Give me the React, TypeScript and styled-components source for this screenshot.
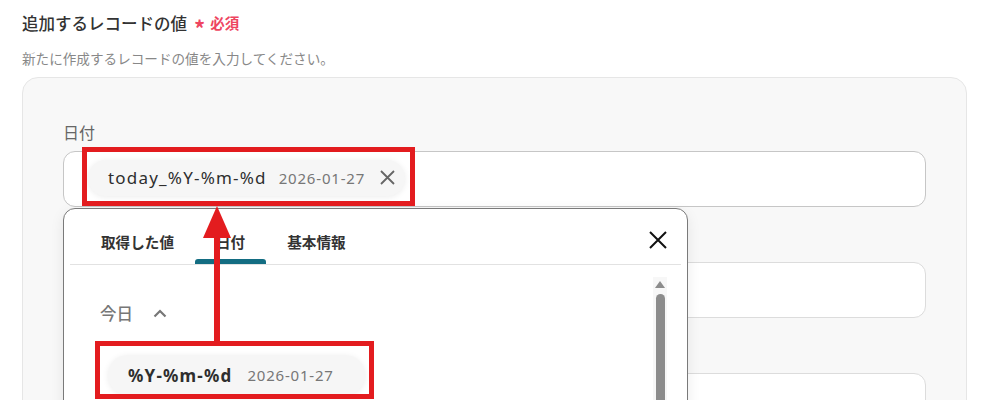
import React from "react";
import styled, { createGlobalStyle } from "styled-components";

const Global = createGlobalStyle`
  html, body { margin: 0; padding: 0; background: #ffffff; }
  body {
    font-family: "Noto Sans", "Noto Sans CJK JP", sans-serif;
    color: #333;
  }
`;

const Page = styled.div`
  position: relative;
  width: 999px;
  height: 400px;
  overflow: hidden;
  box-sizing: border-box;
  padding: 11px 32px 0 22px;
`;

const TitleRow = styled.div`
  display: flex;
  align-items: center;
  gap: 7px;
  height: 24px;
`;

const Title = styled.h2`
  margin: 0;
  font-family: "Noto Sans CJK JP", sans-serif;
  font-size: 16.5px;
  font-weight: 500;
  color: #333;
  line-height: 24px;
`;

const Required = styled.span`
  display: flex;
  align-items: center;
  gap: 5px;
  color: #ee4560;
  font-family: "Noto Sans CJK JP", sans-serif;
  font-size: 14.5px;
  font-weight: 700;
  line-height: 24px;
`;

const Asterisk = styled.span`
  font-size: 22px;
  font-weight: 700;
  line-height: 24px;
  position: relative;
  top: 4px;
`;

const Sub = styled.p`
  margin: 13px 0 0;
  font-family: "Noto Sans CJK JP", sans-serif;
  font-size: 13.6px;
  color: #888;
  line-height: 20px;
`;

const Panel = styled.div`
  margin-top: 9px;
  border: 1px solid #e6e6e6;
  border-radius: 16px;
  background: #f8f8f8;
  padding: 43px 40px 0 40px;
  height: 400px;
  box-sizing: border-box;
  display: flex;
  flex-direction: column;
  gap: 25px;
`;

const Field = styled.div`
  position: relative;
  display: flex;
  flex-direction: column;
  gap: 8px;
`;

const Label = styled.label`
  font-family: "Noto Sans CJK JP", sans-serif;
  font-size: 16px;
  color: #666;
  line-height: 22px;
  height: 22px;
`;

const Input = styled.div<{ $focused?: boolean }>`
  height: 56px;
  box-sizing: border-box;
  border: 1px solid ${(p) => (p.$focused ? "#c6c6c6" : "#dcdcdc")};
  border-radius: 12px;
  background: #fff;
  display: flex;
  align-items: center;
  padding-left: 24px;
`;

const Chip = styled.div<{ $tall?: boolean }>`
  display: inline-flex;
  align-items: center;
  height: ${(p) => (p.$tall ? 40 : 36)}px;
  border-radius: 20px;
  background: #f6f6f6;
  box-shadow: 0 1px 6px rgba(0, 0, 0, 0.08);
  padding: 0 ${(p) => (p.$tall ? 31 : 10)}px 0 20px;
  margin-top: -3px;
`;

const ChipKey = styled.span<{ $bold?: boolean }>`
  font-size: 17px;
  font-weight: ${(p) => (p.$bold ? 700 : 400)};
  color: #2e2e2e;
  letter-spacing: 1.2px;
`;

const ChipValue = styled.span<{ $gap: number }>`
  margin-left: ${(p) => p.$gap}px;
  font-size: 15px;
  color: #777;
  letter-spacing: 0.8px;
`;

const ChipClose = styled.span`
  margin-left: 15px;
  display: flex;
  align-items: center;
`;

const Dropdown = styled.div`
  position: absolute;
  top: calc(100% + 1px);
  left: 0;
  width: 625px;
  height: 230px;
  box-sizing: border-box;
  background: #fff;
  border: 1px solid #7a7a7a;
  border-radius: 12px;
  box-shadow: 0 4px 14px rgba(0, 0, 0, 0.08);
  z-index: 2;
  display: flex;
  flex-direction: column;
`;

const DropHeader = styled.div`
  margin: 0 6px;
  height: 55px;
  border-bottom: 1px solid #e2e2e2;
  display: flex;
  align-items: stretch;
  justify-content: space-between;
  padding-left: 10px;
`;

const Tabs = styled.div`
  display: flex;
`;

const Tab = styled.div<{ $active?: boolean }>`
  padding: 0 21px;
  display: flex;
  flex-direction: column;
  align-items: center;
  justify-content: flex-end;
  font-family: "Noto Sans CJK JP", sans-serif;
  font-size: 14.6px;
  font-weight: 700;
  color: #333;
  line-height: 20px;

  &::after {
    content: "";
    display: block;
    margin-top: 7px;
    height: 5px;
    width: calc(100% + 42px);
    border-radius: 3px 3px 0 0;
    background: ${(p) => (p.$active ? "#136d82" : "transparent")};
  }
`;

const CloseBtn = styled.button`
  border: 0;
  background: none;
  padding: 0;
  margin: 22px 14px 0 0;
  width: 18px;
  height: 18px;
  display: flex;
  cursor: pointer;
`;

const DropBody = styled.div`
  flex: 1;
  display: flex;
`;

const DropContent = styled.div`
  flex: 1;
  padding: 36px 0 0 36px;
  display: flex;
  flex-direction: column;
  align-items: flex-start;
`;

const GroupRow = styled.div`
  display: flex;
  align-items: center;
  gap: 20px;
  height: 24px;
  font-family: "Noto Sans CJK JP", sans-serif;
  font-size: 16.5px;
  font-weight: 500;
  color: #777;
`;

const ItemList = styled.div`
  margin-top: 33px;
  margin-left: 8px;
`;

const ScrollTrack = styled.div`
  width: 14px;
  margin: 12px 20px 0 0;
  background: #f7f7f7;
  display: flex;
  flex-direction: column;
  align-items: center;
  padding-top: 4px;
  gap: 6px;
`;

const ScrollUp = styled.div`
  width: 0;
  height: 0;
  border-left: 5px solid transparent;
  border-right: 5px solid transparent;
  border-bottom: 7px solid #8c8c8c;
`;

const ScrollThumb = styled.div`
  width: 9px;
  flex: 1;
  border-radius: 5px 5px 0 0;
  background: #8c8c8c;
`;

const Overlay = styled.svg`
  position: absolute;
  left: 0;
  top: 0;
  pointer-events: none;
  z-index: 5;
`;

const XIcon = ({ size, color, w }: { size: number; color: string; w: number }) => (
  <svg width={size} height={size} viewBox={`0 0 ${size} ${size}`}>
    <path
      d={`M1 1 L${size - 1} ${size - 1} M${size - 1} 1 L1 ${size - 1}`}
      stroke={color}
      strokeWidth={w}
      strokeLinecap="butt"
      fill="none"
    />
  </svg>
);

const ChevronUp = () => (
  <svg width="14" height="9" viewBox="0 0 14 9">
    <path d="M1.5 7.5 L7 2 L12.5 7.5" stroke="#777" strokeWidth="2.2" fill="none" />
  </svg>
);

const RED = "#e31c1f";

export default function App() {
  return (
    <>
      <Global />
      <Page>
        <TitleRow>
          <Title>追加するレコードの値</Title>
          <Required>
            <Asterisk>*</Asterisk>必須
          </Required>
        </TitleRow>
        <Sub>新たに作成するレコードの値を入力してください。</Sub>
        <Panel>
          <Field>
            <Label>日付</Label>
            <Input $focused>
              <Chip>
                <ChipKey>today_%Y-%m-%d</ChipKey>
                <ChipValue $gap={12}>2026-01-27</ChipValue>
                <ChipClose>
                  <XIcon size={15} color="#666" w={1.8} />
                </ChipClose>
              </Chip>
            </Input>
            <Dropdown>
              <DropHeader>
                <Tabs>
                  <Tab>取得した値</Tab>
                  <Tab $active>日付</Tab>
                  <Tab>基本情報</Tab>
                </Tabs>
                <CloseBtn aria-label="close">
                  <XIcon size={18} color="#111" w={2} />
                </CloseBtn>
              </DropHeader>
              <DropBody>
                <DropContent>
                  <GroupRow>
                    今日
                    <ChevronUp />
                  </GroupRow>
                  <ItemList>
                    <Chip $tall>
                      <ChipKey $bold>%Y-%m-%d</ChipKey>
                      <ChipValue $gap={15}>2026-01-27</ChipValue>
                    </Chip>
                  </ItemList>
                </DropContent>
                <ScrollTrack>
                  <ScrollUp />
                  <ScrollThumb />
                </ScrollTrack>
              </DropBody>
            </Dropdown>
          </Field>
          <Field>
            <Label />
            <Input />
          </Field>
          <Field>
            <Label />
            <Input />
          </Field>
        </Panel>
        <Overlay width="999" height="400" viewBox="0 0 999 400">
          <rect x="84.5" y="149.5" width="328" height="54" fill="none" stroke={RED} strokeWidth="5" />
          <rect x="97.5" y="343.5" width="274" height="53" fill="none" stroke={RED} strokeWidth="5" />
          <rect x="214" y="236" width="6" height="106" fill={RED} />
          <polygon points="217,206 203,238 231,238" fill={RED} />
        </Overlay>
      </Page>
    </>
  );
}
